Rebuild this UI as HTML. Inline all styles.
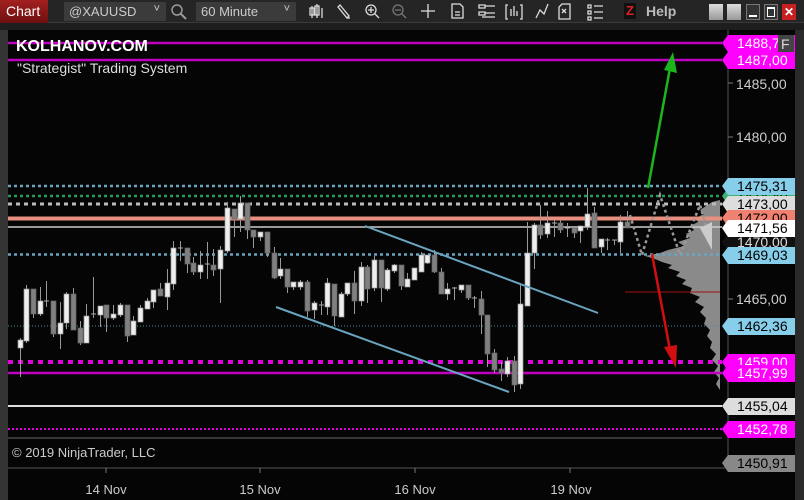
<!DOCTYPE html>
<html><head><meta charset="utf-8"><style>
*{margin:0;padding:0;box-sizing:border-box}
body{width:804px;height:500px;background:#1e1e1e;overflow:hidden;font-family:"Liberation Sans",sans-serif;position:relative}
#tb{position:absolute;left:0;top:0;width:804px;height:23px;background:#252525;border-bottom:1px solid #3a3a3a}
.t{position:absolute;color:#ddd;font-size:13px}
</style></head><body>
<div id="tb">
<div style="position:absolute;left:0;top:0;width:48px;height:23px;background:linear-gradient(#a32020,#6e1010);color:#fff;font-size:14px;padding:3px 0 0 6px">Chart</div>
<div style="position:absolute;left:64px;top:2px;width:102px;height:19px;background:#3b3b3b;color:#ccc;font-size:13px;padding:2px 0 0 5px">@XAUUSD<span style="position:absolute;right:6px;top:1px;font-size:11px">&#x2C5;</span></div>
<svg style="position:absolute;left:170px;top:3px" width="18" height="18"><circle cx="7" cy="7" r="5" fill="none" stroke="#999" stroke-width="1.5"/><line x1="11" y1="11" x2="16" y2="16" stroke="#999" stroke-width="2"/></svg>
<div style="position:absolute;left:196px;top:2px;width:100px;height:19px;background:#3b3b3b;color:#ccc;font-size:13px;padding:2px 0 0 5px">60 Minute<span style="position:absolute;right:6px;top:1px;font-size:11px">&#x2C5;</span></div>
<svg style="position:absolute;left:300px;top:0" width="330" height="23" stroke="#ddd" fill="none" stroke-width="1.3">
<path d="M12 6v12M10 8h4v7h-4zM17 4v14M15 6h4v9h-4zM22 8v10"/>
<path d="M40 5l9 11-2 2-9-11zM47 18l3 0"/>
<circle cx="71" cy="10" r="5"/><path d="M75 14l4 4M68 10h6M71 7v6"/>
<circle cx="98" cy="10" r="5" stroke="#777"/><path d="M102 14l4 4M95 10h6" stroke="#777"/>
<path d="M128 4v14M121 11h14"/>
<path d="M152 4h8l3 3v11h-11zM155 12h5M155 15h5"/>
<path d="M179 5h6v3h-6zM179 12h6v3h-6zM185 6h10M185 13h10M182 17h13"/>
<path d="M208 5h-2v14h2M220 5h2v14h-2M211 16v-7M214 16v-10M217 16v-5"/>
<path d="M236 18l4-8 4 4 4-10"/>
<path d="M262 4h8v15h-11v-12zM262 9l4 4M266 9l-4 4"/>
<path d="M288 5h3v3h-3zM288 11h3v3h-3zM288 17h3v3h-3zM294 6h9M294 12h9M294 18h9"/>
</svg>
<div style="position:absolute;left:624px;top:3px;width:12px;height:16px;background:#111;color:#e02020;font-weight:bold;font-size:13px;text-align:center">Z</div>
<div class="t" style="left:646px;top:3px;font-weight:bold;color:#bbb;font-size:14px">Help</div>
<div style="position:absolute;left:709px;top:4px;width:14px;height:16px;background:linear-gradient(#ddd,#999)"></div>
<div style="position:absolute;left:727px;top:4px;width:14px;height:16px;background:linear-gradient(#ddd,#999)"></div>
<div style="position:absolute;left:746px;top:4px;width:14px;height:16px;background:#333;border:1px solid #777"><div style="position:absolute;left:2px;bottom:2px;width:8px;height:2px;background:#fff"></div></div>
<div style="position:absolute;left:764px;top:4px;width:14px;height:16px;background:#333;border:1px solid #777"><div style="position:absolute;left:2px;top:2px;width:8px;height:10px;border:1px solid #fff;border-top-width:2px"></div></div>
<div style="position:absolute;left:782px;top:4px;width:14px;height:16px;background:#c62020;color:#fff;font-size:12px;font-weight:bold;text-align:center;line-height:16px">✕</div>
</div>
<svg id="c" style="position:absolute;left:0;top:0" width="804" height="500" font-family="Liberation Sans, sans-serif">
<rect x="0" y="30" width="8" height="470" fill="#333"/>
<rect x="8" y="30" width="787" height="470" fill="#050505"/>
<rect x="795" y="30" width="9" height="470" fill="#2a2a2a"/>
<line x1="728" y1="30" x2="728" y2="468" stroke="#555"/>
<line x1="8" y1="468" x2="728" y2="468" stroke="#555"/>
<path d="M720 200 L712 202 L706 206 L700 210 L704 214 L696 218 L698 222 L690 226 L694 230 L686 234 L690 238 L678 242 L684 246 L668 250 L660 253 L645 256 L655 259 L662 262 L672 265 L668 268 L680 272 L676 276 L686 280 L682 284 L692 288 L690 293 L700 297 L695 302 L704 307 L700 312 L706 318 L704 324 L710 330 L707 336 L712 342 L710 348 L716 354 L712 360 L718 366 L714 372 L719 378 L716 384 L720 390 Z" fill="#8a8a8a"/>
<line x1="625" y1="292" x2="720" y2="292" stroke="#a01010"/>
<g id="lines"></g>
<g id="cd"></g>
<line x1="365" y1="226" x2="598" y2="313" stroke="#6aa5c0" stroke-width="2"/>
<line x1="276" y1="307" x2="509" y2="392" stroke="#6aa5c0" stroke-width="2"/>
<path d="M630 215 L642 255 L660 195 L680 255 L700 205 L710 240" fill="none" stroke="#999" stroke-width="2.5" stroke-dasharray="3 3"/>
<path d="M700 228 L712 222 L712 250 Z" fill="#ccc"/>
<line x1="648" y1="188" x2="670" y2="68" stroke="#1db51d" stroke-width="2.5"/>
<path d="M664 70 L673 52 L677 73 Z" fill="#1db51d"/>
<line x1="652" y1="254" x2="670" y2="350" stroke="#d01010" stroke-width="2.5"/>
<path d="M664 347 L676 368 L677 345 Z" fill="#d01010"/>
<text x="16" y="51" fill="#fff" font-size="16" font-weight="bold">KOLHANOV.COM</text>
<text x="17" y="73" fill="#ddd" font-size="14">"Strategist" Trading System</text>
<text x="12" y="457" fill="#ccc" font-size="13">© 2019 NinjaTrader, LLC</text>
<g fill="#ccc" font-size="13" text-anchor="middle"><text x="106" y="494">14 Nov</text><text x="260" y="494">15 Nov</text><text x="415" y="494">16 Nov</text><text x="571" y="494">19 Nov</text></g>
<g stroke="#777"><line x1="106" y1="468" x2="106" y2="473"/><line x1="260" y1="468" x2="260" y2="473"/><line x1="415" y1="468" x2="415" y2="473"/><line x1="570" y1="468" x2="570" y2="473"/></g>
<g fill="#ccc" font-size="14"><text x="736" y="89">1485,00</text><text x="736" y="142">1480,00</text><text x="736" y="304">1465,00</text></g>
<g stroke="#777"><line x1="728" y1="83" x2="733" y2="83"/><line x1="728" y1="137" x2="733" y2="137"/><line x1="728" y1="299" x2="733" y2="299"/><line x1="728" y1="459" x2="733" y2="459"/></g>
<g id="lab" font-size="14"></g>
</svg>
<script>
var L=document.getElementById('lines'),C=document.getElementById('cd'),B=document.getElementById('lab');
function ln(y,c,w,d){L.innerHTML+='<line x1="8" y1="'+y+'" x2="722" y2="'+y+'" stroke="'+c+'" stroke-width="'+w+'"'+(d?' stroke-dasharray="'+d+'"':'')+'/>';}
ln(43,'#c000c0',2.5);ln(60,'#c000c0',2.5);ln(186,'#6aa5c0',2.5,'3 3');ln(196,'#2a9a5a',2.5,'3 3');ln(204,'#bbb',3,'4 4');
ln(218.5,'#e89080',4);ln(227,'#ccc',1.5);ln(254.5,'#6aa5c0',2.5,'3 3');ln(326,'#4a8aa0',1,'1 2');ln(362,'#e000e0',4,'5 5');ln(373,'#c000c0',2.5);ln(406,'#ddd',2);ln(429,'#e000e0',2,'2 2');ln(438,'#666',1);
var cs=[[20,340,348,338,377,1],[26,289,341,285,343,1],[33,289,314,289,318,0],[40,301,314,287,316,1],[46,301,303,281,307,2],[53,301,334,301,337,0],[60,323,334,302,349,1],[66,294,323,292,329,1],[73,294,330,288,330,0],[80,328,343,321,345,0],[86,316,343,304,343,1],[93,314,315,277,318,2],[100,306,315,306,327,1],[106,305,318,305,332,0],[113,314,318,305,320,1],[120,305,315,303,317,1],[127,305,336,305,342,0],[133,321,335,316,335,1],[140,308,322,305,322,1],[147,301,309,298,309,1],[153,290,302,290,308,1],[160,289,296,283,296,0],[167,283,297,269,310,1],[173,248,284,241,290,1],[180,248,249,241,261,2],[187,248,264,248,273,0],[193,263,272,257,275,0],[200,265,272,251,279,1],[207,264,265,242,279,2],[213,265,270,249,276,0],[220,250,269,246,303,1],[227,208,251,202,253,1],[234,209,219,209,237,0],[240,203,219,196,232,1],[247,203,230,203,239,0],[253,230,237,230,248,0],[260,232,237,232,241,1],[267,232,253,232,257,0],[274,253,278,247,279,0],[280,269,276,258,279,1],[287,269,287,269,293,0],[293,282,287,282,290,1],[300,282,287,280,290,1],[307,282,311,280,317,0],[314,303,310,301,319,1],[321,305,306,301,315,2],[327,283,307,278,315,1],[334,284,316,284,326,0],[341,294,317,292,317,1],[347,283,294,283,296,1],[354,283,301,271,314,0],[361,267,301,262,306,1],[367,267,289,265,303,0],[374,260,288,256,291,1],[381,260,288,260,302,0],[387,270,289,268,291,1],[394,265,271,264,273,1],[401,265,286,265,290,0],[407,279,287,273,283,1],[414,268,280,268,279,1],[421,255,272,252,272,1],[427,255,263,255,264,1],[434,255,272,250,273,0],[441,272,294,268,294,0],[447,289,294,283,300,1],[454,288,289,287,300,2],[461,285,290,285,293,1],[468,285,298,285,300,0],[474,298,299,296,308,2],[481,299,315,291,334,0],[487,315,354,315,367,0],[494,353,370,349,373,0],[501,369,373,362,381,0],[507,361,374,357,377,1],[514,361,385,356,392,0],[520,304,384,285,389,1],[527,253,306,222,306,1],[534,225,253,223,269,1],[540,225,235,205,239,0],[547,223,234,211,238,1],[554,223,224,220,237,2],[560,223,230,220,233,0],[567,228,229,223,237,2],[574,228,233,228,238,0],[580,226,231,226,243,1],[587,214,227,188,230,1],[594,213,248,207,248,0],[601,239,247,239,253,1],[607,240,241,238,250,2],[614,240,241,240,245,2],[620,222,242,215,253,1],[627,222,228,211,228,0]];
var h='';cs.forEach(function(c){var x=c[0],t=c[1],b=c[2];h+='<line x1="'+(x+.5)+'" y1="'+c[3]+'" x2="'+(x+.5)+'" y2="'+c[4]+'" stroke="#999"/>';
if(c[5]==2)h+='<line x1="'+(x-2)+'" y1="'+t+'" x2="'+(x+3)+'" y2="'+t+'" stroke="#aaa"/>';
else h+='<rect x="'+(x-2)+'" y="'+t+'" width="5" height="'+Math.max(1,b-t)+'" fill="'+(c[5]?'#eee':'#808080')+'" stroke="'+(c[5]?'#999':'#666')+'" stroke-width="0.7"/>';});C.innerHTML=h;
function lb(y,bg,fg,t){B.innerHTML+='<path d="M722 '+y+' L728 '+(y-8)+' L795 '+(y-8)+' L795 '+(y+9)+' L728 '+(y+9)+' Z" fill="'+bg+'"/><text x="737" y="'+(y+5)+'" fill="'+fg+'">'+t+'</text>';}
lb(43,'#ff00ff','#fff','1488,7');lb(60,'#ff00ff','#fff','1487,00');
lb(362,'#ff00ff','#fff','1459,00');lb(326,'#87ceeb','#000','1462,36');
lb(196,'#3cb371','#000','1474,40');lb(204,'#ddd','#000','1473,00');lb(218,'#f08070','#000','1472,00');lb(242,'#111','#ddd','1470,00');lb(186,'#87ceeb','#000','1475,31');
lb(228,'#fff','#000','1471,56');lb(255,'#87ceeb','#000','1469,03');
lb(373,'#ff00ff','#fff','1457,99');lb(406,'#ddd','#000','1455,04');lb(429,'#ff00ff','#fff','1452,78');lb(463,'#888','#000','1450,91');
B.innerHTML+='<rect x="778" y="35" width="16" height="17" fill="#444"/><text x="781" y="49" fill="#ddd">F</text>';
</script>
</body></html>
